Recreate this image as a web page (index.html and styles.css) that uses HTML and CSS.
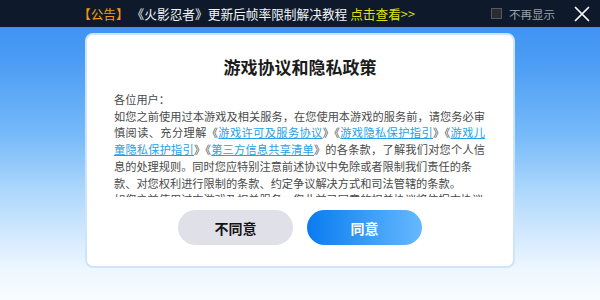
FILE: index.html
```html
<!DOCTYPE html>
<html lang="zh-CN">
<head>
<meta charset="utf-8">
<link rel="stylesheet" href="styles.css">
</head>
<body>
<div class="page">
  <header class="bar">
    <div class="notice">
      <span class="tag">【公告】</span> <span class="msg">《火影忍者》更新后帧率限制解决教程</span>
      <span class="more">点击查看&gt;&gt;</span>
    </div>
    <label class="nomore"><span class="box"></span><span>不再显示</span></label>
    <svg class="close" width="16" height="16" viewBox="0 0 16 16"><path d="M1.5 1.5L14.5 14.5M14.5 1.5L1.5 14.5" stroke="#fff" stroke-width="1.7" fill="none" stroke-linecap="round"/></svg>
  </header>
  <main class="stage">
    <section class="card">
      <h1 class="title">游戏协议和隐私政策</h1>
      <div class="body">
        <div class="ln">各位用户：</div>
        <div class="ln j">如您之前使用过本游戏及相关服务，在您使用本游戏的服务前，请您务必审</div>
        <div class="ln j">慎阅读、充分理解《<a>游戏许可及服务协议</a>》《<a>游戏隐私保护指引</a>》《<a>游戏儿</a></div>
        <div class="ln j"><a>童隐私保护指引</a>》《<a>第三方信息共享清单</a>》的各条款，了解我们对您个人信</div>
        <div class="ln">息的处理规则。同时您应特别注意前述协议中免除或者限制我们责任的条</div>
        <div class="ln">款、对您权利进行限制的条款、约定争议解决方式和司法管辖的条款。</div>
        <div class="ln">如您之前使用过本游戏及相关服务，您此前已同意的相关协议将依据本协议</div>
      </div>
      <div class="actions">
        <button class="btn no">不同意</button>
        <button class="btn yes">同意</button>
      </div>
    </section>
  </main>
</div>
</body>
</html>
```
FILE: styles.css
```css
* { box-sizing: border-box; }
html, body { margin: 0; padding: 0; }
body {
  width: 600px;
  height: 300px;
  overflow: hidden;
  font-family: "Noto Sans CJK SC", "Noto Sans", sans-serif;
}
.page {
  width: 600px;
  height: 300px;
  display: flex;
  flex-direction: column;
  background: linear-gradient(180deg, #388cf0 0%, #4a9cf4 20%, #76baf9 45%, #a9d5fc 62%, #d2e9fe 78%, #eef7ff 90%, #f8fcff 100%);
}
.bar {
  height: 27px;
  flex: none;
  background: #0e1a2b;
  display: flex;
  align-items: center;
  padding: 0 10px 0 78px;
  color: #fff;
}
.notice {
  font-size: 12.7px;
  line-height: 27px;
  white-space: nowrap;
  flex: 1;
}
.tag { color: #f29a12; }
.msg { color: #f2f4f7; }
.more { color: #dfe012; }
.nomore {
  display: flex;
  align-items: center;
  gap: 7px;
  font-size: 11.5px;
  color: #9aa0a8;
  margin-right: 19px;
}
.box {
  width: 11px;
  height: 11px;
  background: #2a2c30;
  border: 1px solid #55585e;
}
.close { display: block; }
.stage {
  flex: 1;
  display: flex;
  justify-content: center;
  padding-top: 6px;
}
.card {
  width: 430px;
  height: 235px;
  background: #fff;
  border: 2px solid #cfe4fb;
  border-radius: 8px;
  padding: 20px 0 0 27px;
  display: flex;
  flex-direction: column;
}
.title {
  margin: 0;
  padding-right: 27px;
  text-align: center;
  font-size: 17px;
  line-height: 24px;
  font-weight: 700;
  color: #1b1b1b;
}
.body {
  margin-top: 12px;
  height: 106px;
  overflow: hidden;
  font-size: 11.2px;
  line-height: 16.7px;
  color: #4a4a4a;
  width: 374px;
}
.ln { white-space: nowrap; }
.ln.j { text-align: justify; text-align-last: justify; width: 371px; }
.body a { color: #26a0e6; text-decoration: underline; text-underline-offset: 1px; }
.actions {
  margin-top: 13px;
  padding-right: 27px;
  display: flex;
  justify-content: center;
  gap: 14px;
}
.btn {
  width: 115px;
  height: 35px;
  border: none;
  border-radius: 18px;
  font-family: inherit;
  font-size: 14px;
  font-weight: 700;
}
.no { background: #e0e0e9; color: #151515; }
.yes { background: linear-gradient(90deg, #0a7bf0 0%, #3b9ef8 55%, #66b8ff 100%); color: #fff; }
```
